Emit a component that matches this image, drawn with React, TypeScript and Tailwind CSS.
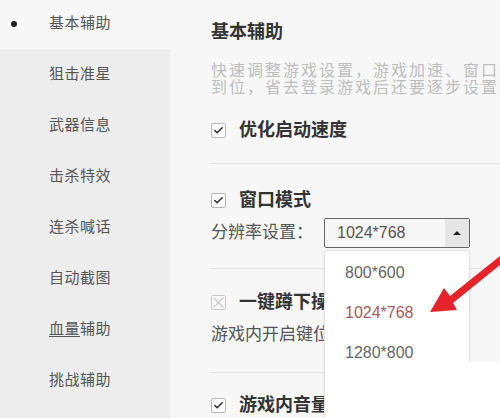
import { Check } from "lucide-react";

const menu = ["基本辅助", "狙击准星", "武器信息", "击杀特效", "连杀喊话", "自动截图", "血量辅助", "挑战辅助"];

function Box({ checked = true }: { checked?: boolean }) {
  if (!checked) {
    return (
      <svg className="h-[15px] w-[15px] shrink-0" viewBox="0 0 15 15">
        <rect x="0.5" y="0.5" width="14" height="14" rx="1.5" fill="#fafafa" stroke="#c8c8c8" />
        <path d="M2.5 2.5 L12.5 12.5 M12.5 2.5 L2.5 12.5" stroke="#c8c8c8" strokeWidth="1.1" />
      </svg>
    );
  }
  return (
    <span className="flex h-[15px] w-[15px] shrink-0 items-center justify-center rounded-[2px] border border-[#b5b5b5] bg-white">
      <Check className="h-[11px] w-[11px] text-[#333]" strokeWidth={3.5} />
    </span>
  );
}

function Option({ label, checked = true }: { label: string; checked?: boolean }) {
  return (
    <div className="flex h-[20px] items-center gap-[13px] whitespace-nowrap">
      <Box checked={checked} />
      <span className="text-[18px] font-bold leading-[20px] text-[#333]">{label}</span>
    </div>
  );
}

export default function App() {
  return (
    <div className="relative flex h-[418px] w-[500px] overflow-hidden bg-[#f7f7f7] font-['Liberation_Sans','Noto_Sans_CJK_SC',sans-serif]">
      {/* sidebar */}
      <div className="flex w-[170px] shrink-0 flex-col bg-[#ededed]">
        <div className="-mt-[2px]">
          {menu.map((m, i) => (
            <div
              key={m}
              className={
                "relative flex h-[51px] items-center pl-[49px] text-[15px] tracking-[0.5px] text-[#555] " +
                (i === 0 ? "bg-[#f7f7f7]" : "")
              }
            >
              {i === 0 && <span className="absolute left-[11px] h-[6px] w-[6px] rounded-full bg-[#222]" />}
              {i === 6 ? (
                <span>
                  <span className="underline underline-offset-2">血量</span>辅助
                </span>
              ) : (
                m
              )}
            </div>
          ))}
        </div>
      </div>

      {/* main panel */}
      <div className="flex min-w-0 flex-1 flex-col pl-[41px] pt-[22px]">
        <div className="h-[20px] text-[18px] font-bold leading-[20px] text-[#333]">基本辅助</div>
        <div className="mt-[20px] whitespace-nowrap text-[16px] leading-[17px] tracking-[2px] text-[#bdbdbd]">
          <div>快速调整游戏设置，游戏加速、窗口模式、分辨率一键设置</div>
          <div>到位，省去登录游戏后还要逐步设置的麻烦。</div>
        </div>

        <div className="mt-[24px]">
          <Option label="优化启动速度" />
        </div>
        <div className="mt-[23px] h-px bg-[#e3e3e3]" />

        <div className="mt-[26px]">
          <Option label="窗口模式" />
        </div>
        <div className="mt-[8px] flex h-[30px] items-center whitespace-nowrap">
          <span className="w-[113px] shrink-0 text-[17px] text-[#555]">分辨率设置：</span>
          <div className="relative">
            <div className="flex h-[30px] w-[146px] items-stretch rounded-[2px] border border-[#666] bg-[#f7f7f7]">
              <span className="flex flex-1 items-center pl-[12px] text-[16px] text-[#555]">1024*768</span>
              <span className="flex w-[24px] items-center justify-center bg-[#e6e6e6]">
                <span className="h-0 w-0 border-x-[4px] border-b-[4px] border-x-transparent border-b-[#222]" />
              </span>
            </div>
            <div className="absolute left-0 top-[32px] z-10 flex h-[200px] w-[146px] flex-col rounded-t-[3px] border-l border-t border-r border-[#e2e2e2] bg-white pl-[20px] pt-[11px] text-[16px] shadow-[0_1px_3px_rgba(0,0,0,0.08)]">
              <span className="h-[40px] leading-[22px] text-[#666]">800*600</span>
              <span className="h-[40px] leading-[22px] text-[#a65b5e]">1024*768</span>
              <span className="h-[40px] leading-[22px] text-[#666]">1280*800</span>
            </div>
          </div>
        </div>
        <div className="mt-[20px] h-px bg-[#e3e3e3]" />

        <div className="mt-[23px]">
          <Option label="一键蹲下操作" checked={false} />
        </div>
        <div className="mt-[13px] h-[20px] whitespace-nowrap text-[17px] leading-[20px] text-[#555]">
          游戏内开启键位后，按下即可蹲下
        </div>
        <div className="mt-[27px] h-px bg-[#e3e3e3]" />

        <div className="mt-[22px]">
          <Option label="游戏内音量调节" />
        </div>
      </div>

      {/* erased watermark area */}
      <div className="absolute left-[345px] top-[362px] z-20 h-[56px] w-[155px] bg-white" />

      {/* red annotation arrow */}
      <svg className="pointer-events-none absolute inset-0 z-30" width="500" height="418" viewBox="0 0 500 418">
        <polygon points="430,312 444,288 450,296 500,256 500,265 453,303 457,310" fill="#e5232b" />
      </svg>
    </div>
  );
}
